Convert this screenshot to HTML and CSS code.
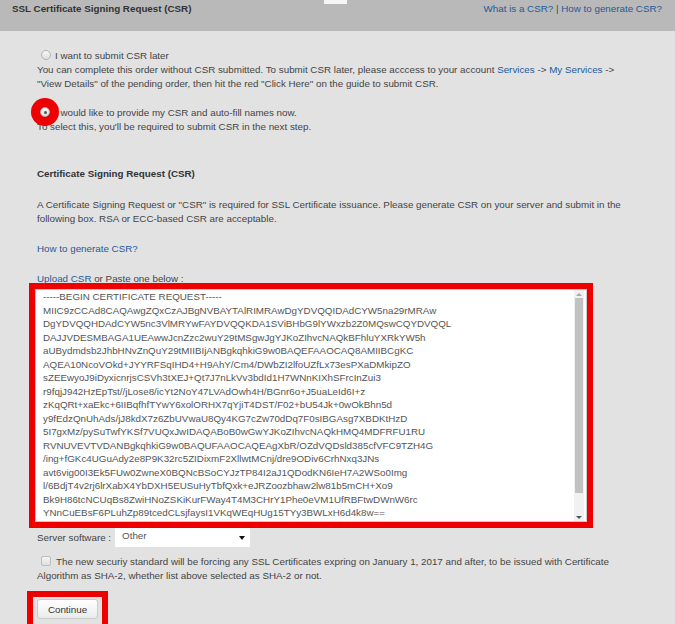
FILE: index.html
```html
<!DOCTYPE html>
<html lang="en">

<head>
    <meta charset="UTF-8">
    <meta name="viewport" content="width=device-width, initial-scale=1.0">
    <link rel="stylesheet" href="styles.css">
</head>

<body>

    <div class="topbar">
        <h2 class="title">SSL Certificate Signing Request (CSR)</h2>
        <div class="help"><a href="#">What is a CSR?</a> | <a href="#">How to generate CSR?</a></div>
        <span class="tab"></span>
    </div>

    <div class="content">
        <div class="option">
            <label class="choice"><span class="radio"></span>I want to submit CSR later</label>
            <p>You can complete this order without CSR submitted. To submit CSR later, please acccess to your account <a href="#">Services</a> -&gt; <a href="#">My Services</a> -&gt; "View Details" of the pending order, then hit the red "Click Here" on the guide to submit CSR.</p>
        </div>

        <div class="option second">
            <span class="mark-circle"></span>
            <label class="choice"><span class="radio checked"></span>I would like to provide my CSR and auto-fill names now.</label>
            <p>To select this, you'll be required to submit CSR in the next step.</p>
        </div>

        <h3 class="section-title">Certificate Signing Request (CSR)</h3>
        <p class="intro">A Certificate Signing Request or "CSR" is required for SSL Certificate issuance. Please generate CSR on your server and submit in the following box. RSA or ECC-based CSR are acceptable.</p>
        <p class="gap"><a href="#">How to generate CSR?</a></p>
        <p class="gap"><a href="#">Upload CSR</a> or Paste one below :</p>

        <div class="mark-box csr-mark">
            <div class="csr-field">
                <div class="csr-text">-----BEGIN CERTIFICATE REQUEST-----
MIIC9zCCAd8CAQAwgZQxCzAJBgNVBAYTAlRIMRAwDgYDVQQIDAdCYW5na29rMRAw
DgYDVQQHDAdCYW5nc3VlMRYwFAYDVQQKDA1SViBHbG9lYWxzb2Z0MQswCQYDVQQL
DAJJVDESMBAGA1UEAwwJcnZzc2wuY29tMSgwJgYJKoZIhvcNAQkBFhluYXRkYW5h
aUBydmdsb2JhbHNvZnQuY29tMIIBIjANBgkqhkiG9w0BAQEFAAOCAQ8AMIIBCgKC
AQEA10NcoVOkd+JYYRFSqIHD4+H9AhY/Cm4/DWbZI2lfoUZfLx73esPXaDMkipZO
sZEEwyoJ9iDyxicnrjsCSVh3tXEJ+Qt7J7nLkVv3bdId1H7WNnKIXhSFrcInZui3
r9fqjJ942HzEpTst//jLose8/icYt2NoY47LVAdOwh4H/BGnr6o+J5uaLeId6I+z
zKqQRt+xaEkc+6IIBqfhfTYwY6xolORHX7qYjiT4DST/F02+bU54Jk+0wOkBhn5d
y9fEdzQnUhAds/jJ8kdX7z6ZbUVwaU8Qy4KG7cZw70dDq7F0sIBGAsg7XBDKtHzD
5I7gxMz/pySuTwfYKSf7VUQxJwIDAQABoB0wGwYJKoZIhvcNAQkHMQ4MDFRFU1RU
RVNUVEVTVDANBgkqhkiG9w0BAQUFAAOCAQEAgXbR/OZdVQDsld385cfVFC9TZH4G
/ing+fGKc4UGuAdy2e8P9K32rc5ZIDixmF2XllwtMCnj/dre9ODiv6CrhNxq3JNs
avt6vig00I3Ek5FUw0ZwneX0BQNcBSoCYJzTP84I2aJ1QDodKN6IeH7A2WSo0Img
l/6BdjT4v2rj6lrXabX4YbDXH5EUSuHyTbfQxk+eJRZoozbhaw2lw81b5mCH+Xo9
Bk9H86tcNCUqBs8ZwiHNoZSKiKurFWay4T4M3CHrY1Phe0eVM1UfRBFtwDWnW6rc
YNnCuEBsF6PLuhZp89tcedCLsjfaysI1VKqWEqHUg15TYy3BWLxH6d4k8w==</div>
                <div class="scrollbar">
                    <span class="arrow up"></span>
                    <span class="thumb"></span>
                    <span class="track"></span>
                    <span class="arrow down"></span>
                </div>
            </div>
        </div>

        <div class="server-row">
            <span class="server-label">Server software :</span>
            <div class="select"><span>Other</span><span class="caret"></span></div>
        </div>

        <p class="agree"><span class="checkbox"></span>The new securiy standard will be forcing any SSL Certificates expring on January 1, 2017 and after, to be issued with Certificate Algorithm as SHA-2, whether list above selected as SHA-2 or not.</p>

        <div class="mark-box btn-mark">
            <button class="btn">Continue</button>
        </div>
    </div>

</body>

</html>
```

FILE: styles.css
```css
body {
    margin: 0;
    font-family: 'Liberation Sans', Arial, sans-serif;
    font-size: 9.8px;
    color: #444;
    background: #e2e2e2;
    overflow: hidden;
}

a {
    color: #245a98;
    text-decoration: none;
}

p {
    margin: 0;
    line-height: 14px;
}

.topbar {
    position: relative;
    display: flex;
    justify-content: space-between;
    height: 29px;
    padding: 2px 13px 0 12px;
    background: #b9b9b9;
    line-height: 14px;
}

.title {
    margin: 0;
    font-size: 9.8px;
    color: #333;
}

.help {
    color: #444;
}

.tab {
    position: absolute;
    top: 0;
    left: 324px;
    width: 23px;
    height: 4px;
    background: #f6f6f6;
}

.content {
    padding: 16px 40px 0 37px;
}

.option {
    position: relative;
}

.second {
    margin-top: 13px;
}

.choice {
    display: flex;
    align-items: center;
    height: 16px;
}

.radio {
    position: relative;
    z-index: 2;
    display: flex;
    align-items: center;
    justify-content: center;
    width: 8px;
    height: 8px;
    margin: 0 4px 0 4px;
    border: 1px solid #b4b4b4;
    border-radius: 50%;
    background: linear-gradient(#f7f7f7, #dedede);
}

.radio.checked {
    margin-left: 3px;
    margin-right: 5px;
}

.radio.checked::after {
    content: "";
    width: 3px;
    height: 3px;
    border-radius: 50%;
    background: #555;
}

.mark-circle {
    position: absolute;
    z-index: 1;
    top: -6px;
    left: -6px;
    width: 28px;
    height: 28px;
    border-radius: 50%;
    background: #ee0000;
}

.section-title {
    margin: 33px 0 0;
    font-size: 9.8px;
    line-height: 14px;
    color: #333;
}

.intro {
    margin-top: 17px;
}

.gap {
    margin-top: 16px;
}

.mark-box {
    border: 6px solid #ee0000;
}

.csr-mark {
    width: 552px;
    margin: -3px 0 0 -8px;
}

.csr-field {
    display: flex;
    height: 231px;
    border: 1px solid #c9c9c9;
    background: #fff;
}

.csr-text {
    flex: 1;
    padding: 0 0 0 7px;
    white-space: pre;
    overflow: hidden;
    line-height: 13.5px;
    color: #555;
}

.scrollbar {
    display: flex;
    flex-direction: column;
    width: 10px;
    margin-right: 2px;
    background: #f1f1f1;
}

.arrow {
    display: flex;
    justify-content: center;
    align-items: center;
    height: 8px;
}

.arrow.up::before {
    content: "";
    border: 3px solid transparent;
    border-top: 0;
    border-bottom: 3px solid #a9a9a9;
}

.arrow.down::before {
    content: "";
    border: 3px solid transparent;
    border-bottom: 0;
    border-top: 3px solid #555;
}

.thumb {
    height: 195px;
    margin: 0 1px;
    background: #c1c1c1;
}

.track {
    flex: 1;
}

.server-row {
    display: flex;
    align-items: center;
    gap: 4px;
}

.select {
    display: flex;
    justify-content: space-between;
    align-items: center;
    width: 123px;
    height: 19px;
    padding: 0 5px 0 7px;
    background: #fff;
    color: #555;
    line-height: 14px;
}

.select span:first-child {
    margin-top: -3px;
}

.caret {
    border: 3px solid transparent;
    border-bottom: 0;
    border-top: 4px solid #111;
}

.agree {
    margin-top: 8px;
    padding-right: 20px;
}

.checkbox {
    display: inline-block;
    width: 8px;
    height: 8px;
    margin: 0 5px 0 4px;
    vertical-align: -1px;
    border: 1px solid #bdbdbd;
    border-radius: 2px;
    background: linear-gradient(#f5f5f5, #dfdfdf);
}

.btn-mark {
    display: inline-block;
    margin: 8px 0 0 -10px;
    padding: 2px 4px 12px;
}

.btn {
    width: 61px;
    height: 20px;
    padding: 0;
    border: 1px solid #cbcbcb;
    border-radius: 3px;
    background: linear-gradient(#ffffff, #ebebeb);
    font-family: 'Liberation Sans', Arial, sans-serif;
    font-size: 9.8px;
    color: #333;
}
```
